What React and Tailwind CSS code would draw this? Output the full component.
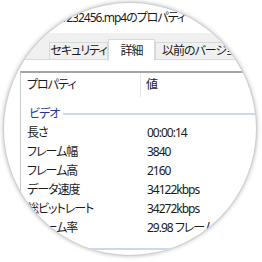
const rows = [
  { name: "長さ", value: "00:00:14" },
  { name: "フレーム幅", value: "3840" },
  { name: "フレーム高", value: "2160" },
  { name: "データ速度", value: "34122kbps" },
  { name: "総ビットレート", value: "34272kbps" },
  { name: "フレーム率", value: "29.98 フレーム/秒" },
];

const jp = "font-['Noto_Sans','Noto_Sans_CJK_JP',sans-serif] [font-feature-settings:'palt']";

export default function App() {
  return (
    <div className="w-[262px] h-[262px] bg-white pt-[3px] pl-[4px]">
      {/* magnifier lens */}
      <div
        className={`w-[252px] h-[252px] rounded-full overflow-hidden bg-white text-[12px] leading-none tracking-[-1px] text-[#1a1a1a] shadow-[0_0_0_1px_#cfcfcf,0_0_4px_1px_rgba(0,0,0,0.28)] ${jp}`}
      >
        {/* title bar */}
        <div className="h-[30px] flex items-center whitespace-nowrap">
          <span className="w-[74px] shrink-0 flex justify-end overflow-hidden">
            <span className="shrink-0">VID_2019123</span>
          </span>
          <span className="shrink-0">2456.mp4のプロパティ</span>
        </div>

        {/* tab strip */}
        <div className="h-[27px] bg-[#f0f0f0] flex items-end">
          <div className="w-[45px] h-px bg-[#d9d9d9] shrink-0" />
          <div className="w-[59px] h-[18px] shrink-0 border border-[#d9d9d9] flex items-center justify-center whitespace-nowrap">
            セキュリティ
          </div>
          <div className="w-[47px] h-[22px] -mb-px shrink-0 bg-white border border-b-0 border-[#d9d9d9] flex items-center justify-center">
            詳細
          </div>
          <div className="w-[82px] h-[18px] shrink-0 border border-[#d9d9d9] pl-[6px] flex items-center whitespace-nowrap overflow-hidden">
            以前のバージョン
          </div>
          <div className="flex-1 h-px bg-[#d9d9d9]" />
        </div>

        {/* tab page */}
        <div className="pt-[11px] pl-[16px]">
          <div className="border-t-2 border-l border-t-[#a5a5a5] border-l-[#c8c8c8]">
            <div className="h-[24px] flex items-center">
              <div className="w-[120px] h-full pl-[6px] flex items-center border-r border-[#e5e5e5]">
                プロパティ
              </div>
              <div className="pl-[5px]">値</div>
            </div>

            <div className="mt-[8px] h-[18px] pl-[8px] flex items-center gap-[4px]">
              <span className="text-[#1e3a9a]">ビデオ</span>
              <div className="flex-1 h-[2px] bg-[#cdd8ee]" />
            </div>

            {rows.map((r) => (
              <div key={r.name} className="h-[19px] flex items-center whitespace-nowrap">
                <div className="w-[120px] pl-[6px]">{r.name}</div>
                <div className="pl-[6px]">{r.value}</div>
              </div>
            ))}

            <div className="mt-[11px] h-[2px] bg-[#cdd8ee]" />
          </div>
        </div>
      </div>
    </div>
  );
}
